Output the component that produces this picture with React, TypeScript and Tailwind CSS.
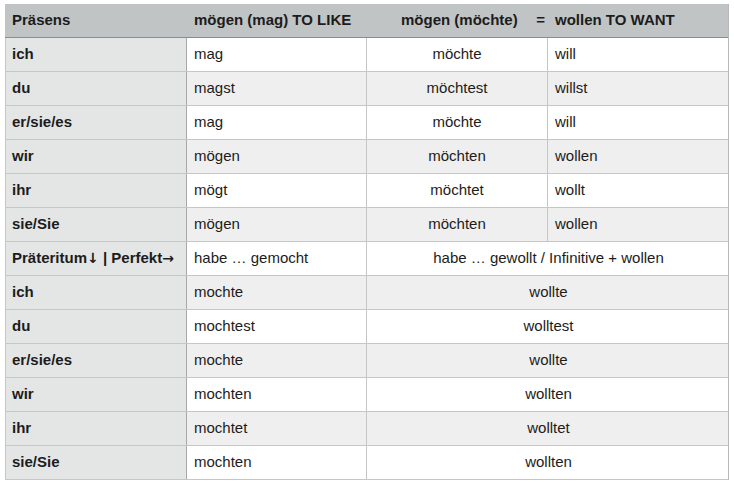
import React from "react";

type Row = { p: React.ReactNode; a: string; b?: string; c: string };

const Arrow: React.FC<{ ch: string }> = ({ ch }) => (
  <span className="text-[14px]" style={{ fontFamily: '"DejaVu Sans", sans-serif' }}>
    {ch}
  </span>
);

const present: Row[] = [
  { p: "ich", a: "mag", b: "möchte", c: "will" },
  { p: "du", a: "magst", b: "möchtest", c: "willst" },
  { p: "er/sie/es", a: "mag", b: "möchte", c: "will" },
  { p: "wir", a: "mögen", b: "möchten", c: "wollen" },
  { p: "ihr", a: "mögt", b: "möchtet", c: "wollt" },
  { p: "sie/Sie", a: "mögen", b: "möchten", c: "wollen" },
];

const past: Row[] = [
  {
    p: (
      <>
        Präteritum<Arrow ch="↓" />&nbsp;| Perfekt<Arrow ch="→" />
      </>
    ),
    a: "habe … gemocht",
    c: "habe … gewollt / Infinitive + wollen",
  },
  { p: "ich", a: "mochte", c: "wollte" },
  { p: "du", a: "mochtest", c: "wolltest" },
  { p: "er/sie/es", a: "mochte", c: "wollte" },
  { p: "wir", a: "mochten", c: "wollten" },
  { p: "ihr", a: "mochtet", c: "wolltet" },
  { p: "sie/Sie", a: "mochten", c: "wollten" },
];

const App: React.FC = () => {
  const rows = [...present, ...past];

  return (
    <div
      className="min-h-[486px] bg-white pl-[5px] pt-[4px] text-[15px] text-[#1c1c1c]"
      style={{ fontFamily: '"Liberation Sans", Arial, sans-serif' }}
    >
      <div className="w-[724px] border-r border-[#b8b8b8]">
        {/* Header */}
        <div className="grid h-[34px] grid-cols-[181px_180px_181px_182px] items-center border-b border-[#8c8c8c] bg-[#c1c4c5] font-bold">
          <div className="pl-[7px]">Präsens</div>
          <div className="pl-[8px]">mögen (mag) TO LIKE</div>
          <div className="flex items-center pl-[35px] pr-[2px]">
            <span>mögen (möchte)</span>
            <span className="ml-auto">=</span>
          </div>
          <div className="pl-[8px]">wollen TO WANT</div>
        </div>

        {rows.map((r, i) => (
          <div
            key={i}
            className={`grid h-[34px] grid-cols-[181px_180px_181px_182px] border-b border-l border-[#c6c6c6] ${
              i % 2 === 0 ? "bg-white" : "bg-[#efefef]"
            }`}
          >
            <div className="flex items-center border-r border-[#a8a8a8] bg-[#e4e5e5] pl-[6px] font-bold">
              {r.p}
            </div>
            <div className="flex items-center border-r border-[#c6c6c6] pl-[7px]">{r.a}</div>
            {r.b !== undefined ? (
              <>
                <div className="flex items-center justify-center border-r border-[#c6c6c6]">{r.b}</div>
                <div className="flex items-center pl-[7px]">{r.c}</div>
              </>
            ) : (
              <div className="col-span-2 flex items-center justify-center">{r.c}</div>
            )}
          </div>
        ))}
      </div>
    </div>
  );
};

export default App;
